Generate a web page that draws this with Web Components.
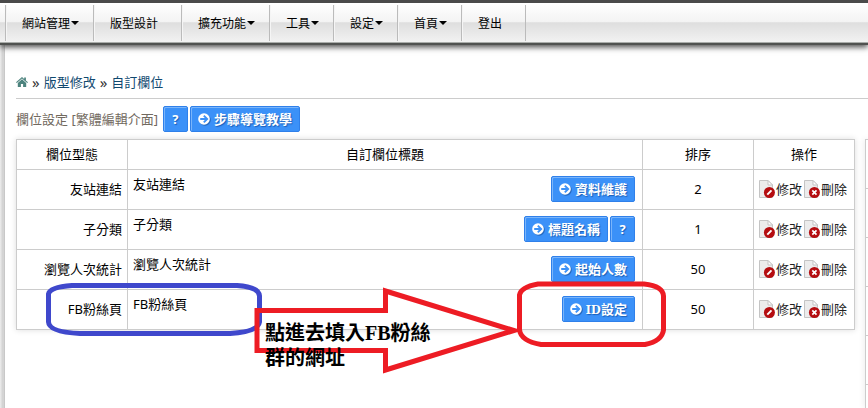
<!DOCTYPE html>
<html lang="zh-Hant">
<head>
<meta charset="utf-8">
<title>自訂欄位</title>
<style>
html, body { height: 100%; }
body { margin: 0; background: #fff; color: #000; font: 13px/18px "Noto Sans", "Noto Sans CJK TC", sans-serif; }
</style>
</head>
<body>
<admin-page></admin-page>
<script>
const define = (name, html, setup) => customElements.define(name, class extends HTMLElement {
  connectedCallback() {
    if (this.shadowRoot) return;
    const root = this.attachShadow({ mode: "open" });
    const t = document.createElement("template");
    t.innerHTML = html;
    root.append(t.content.cloneNode(true));
    if (setup) setup(this, root);
  }
});

define("menu-item", `
<style>
:host { display: block; padding: 2px 23px 0 16px; border-left: 1px solid #bbb; box-shadow: inset 1px 0 #f5f5f5; }
a { display: flex; align-items: center; color: #000; font-size: 12px; line-height: 34px; text-decoration: none; white-space: nowrap; }
i { display: none; width: 0; margin: 0 -9px 2px 1px; border: 4px solid transparent; border-top-color: #000; border-bottom: 0; }
:host([menu]) i { display: block; }
</style>
<a href="#"><slot></slot><i></i></a>`);

define("menu-bar", `
<style>
:host { display: block; position: relative; border-top: 3px solid #4a4a4a; border-bottom: 2px solid #505250; box-shadow: 0 2px 6px #444; background: linear-gradient(#fff 0, #f3f3f3 48%, #dedede 49%, #f3f3f3 100%); }
nav { display: flex; padding: 2px 0 1px 5px; border-bottom: 1px solid #aaadaa; }
.end { border-left: 1px solid #bbb; }
</style>
<nav aria-label="主選單">
<menu-item menu>網站管理</menu-item><menu-item>版型設計</menu-item><menu-item menu>擴充功能</menu-item><menu-item menu>工具</menu-item><menu-item menu>設定</menu-item><menu-item menu>首頁</menu-item><menu-item>登出</menu-item><span class="end"></span>
</nav>`);

define("blue-button", `
<style>
:host { display: inline-flex; }
button { display: flex; align-items: center; justify-content: center; gap: 4px; min-width: 25px; height: 26px; padding: 0 7px; border: 1px solid #2f80ea; border-radius: 2px; background: #3b91f8; box-shadow: inset 1px 1px #7ab5fb; color: #fff; font: bold 13px/18px "Noto Sans", "Noto Sans CJK TC", sans-serif; text-shadow: 1px 1px 1px #1b5fb8; white-space: nowrap; }
:host([serif]) button { font-family: "Noto Serif", "DejaVu Serif", "Noto Sans CJK TC", serif; }
svg { display: none; filter: drop-shadow(1px 1px #2468bd); }
:host([arrow]) svg { display: block; }
</style>
<button type="button"><svg width="12" height="12" viewBox="0 0 12 12"><circle cx="6" cy="6" r="5.8" fill="#fff"/><path d="M2.2 6H9M5.8 2.6 9.2 6 5.8 9.4" fill="none" stroke="#3b91f8" stroke-width="1.9"/></svg><slot></slot></button>`);

define("row-action", `
<style>
:host { display: inline-flex; }
a { display: flex; align-items: center; color: #222; text-decoration: none; line-height: 20px; white-space: nowrap; }
svg { margin-right: 1px; }
:host([kind=edit]) .x, :host([kind=delete]) .slash { display: none; }
</style>
<a href="#"><svg width="16" height="20" viewBox="0 0 16 20"><path d="M.5 1.500H9l4.500 4.500v12.500H.5z" fill="#ececec" stroke="#c4c4c4"/><path d="M9 1.500V6h4.500z" fill="#fff" stroke="#c4c4c4"/><circle cx="10.400" cy="13.500" r="5.500" fill="#b50d10"/><path class="slash" d="m8.300 15.600 4.200-4.200" stroke="#fff" stroke-width="2"/><path class="x" d="m8.300 11.400 4.200 4.200m0-4.200-4.200 4.200" stroke="#fff" stroke-width="1.700"/></svg><slot></slot></a>`);

define("bread-crumbs", `
<style>
:host { display: block; border-bottom: 1px solid #ccc; }
nav { display: flex; align-items: center; gap: 4px; height: 29px; padding-bottom: 2px; color: #333; }
a { color: #10496f; text-decoration: none; }
span { font-size: 15px; }
svg { display: block; margin-top: 1px; }
</style>
<nav aria-label="路徑"><a href="#" aria-label="首頁"><svg width="12" height="10" viewBox="0 0 12 10"><path d="M6 2.300 10.200 6v4H7.100V7H4.900v3H1.800V6zM6 0l2.200 1.900V.6h1.700v2.800L12 5.200l-.8.9L6 1.500.8 6.100 0 5.200z" fill="#4d837e"/></svg></a><span>»</span><a href="#">版型修改</a><span>»</span><a href="#">自訂欄位</a></nav>`);

define("field-table", `
<style>
:host { display: block; }
table { width: 100%; border-collapse: collapse; table-layout: fixed; box-shadow: 0 0 6px #ddd; background: #fff; }
th, td { border: 1px solid #ccc; padding: 0 5px 2px; }
th { height: 27px; font-weight: 400; }
td { height: 37px; }
.type { width: 100px; text-align: right; }
th.type { text-align: center; }
.rank { width: 100px; text-align: center; }
.ops { width: 90px; }
.cell { display: flex; justify-content: space-between; height: 29px; }
.cell > span:first-child { line-height: 20px; }
.buttons { display: flex; gap: 2px; align-items: center; margin-right: 2px; }
.actions { display: flex; gap: 2px; }
</style>
<table><thead><tr><th class="type">欄位型態</th><th>自訂欄位標題</th><th class="rank">排序</th><th class="ops">操作</th></tr></thead><tbody></tbody></table>`,
(host, root) => {
  const rows = [
    ["友站連結", "<blue-button arrow>資料維護</blue-button>", 2],
    ["子分類", "<blue-button arrow>標題名稱</blue-button><blue-button>?</blue-button>", 1],
    ["瀏覽人次統計", "<blue-button arrow>起始人數</blue-button>", 50],
    ["FB粉絲頁", "<blue-button arrow serif>ID設定</blue-button>", 50]
  ];
  root.querySelector("tbody").innerHTML = rows.map(([name, buttons, rank]) => `<tr><td class="type">${name}</td><td><div class="cell"><span>${name}</span><span class="buttons">${buttons}</span></div></td><td class="rank">${rank}</td><td class="ops"><div class="actions"><row-action kind="edit">修改</row-action><row-action kind="delete">刪除</row-action></div></td></tr>`).join("");
});

define("side-panel", `
<style>
:host { display: block; border: 1px solid #ccc; border-width: 1px 0 0 1px; box-shadow: 0 0 6px #ddd; }
div { height: 48px; border-bottom: 1px solid #ccc; }
div:first-child { height: 29px; }
</style>
<div></div><div></div><div></div><div></div><div></div>`);

define("note-layer", `
<style>
:host { position: absolute; left: 0; top: 0; pointer-events: none; }
svg { display: block; }
p { position: absolute; left: 265px; top: 321px; margin: 0; font: bold 20px/25px "Liberation Serif", "Noto Sans CJK TC", serif; white-space: nowrap; }
</style>
<svg width="868" height="408" viewBox="0 0 868 408" fill="none">
<path d="M72 285.500H237Q259 287 259.500 296V322Q258 332 230 333.500H80Q49 332 48.500 322V294Q50 287 72 285.500Z" stroke="#3f48cc" stroke-width="5"/>
<path d="M257 310.500H385.500V291L514 330.500 385.500 370V350.500H257Z" stroke="#ed1c24" stroke-width="5"/>
<path d="M538 284H644Q663 286 663.500 296V330Q662 341 645 344.500H541Q521 341 519.500 330V295Q521 287 538 284Z" stroke="#ed1c24" stroke-width="5"/>
</svg>
<p>點進去填入FB粉絲<br>群的網址</p>`);

define("admin-page", `
<style>
:host { display: flex; flex-direction: column; position: relative; min-height: 100vh; overflow: hidden; }
.body { flex: 1; display: grid; grid-template-columns: 5px minmax(0, 1fr); }
.rail { background: linear-gradient(90deg, #eee, #d4d4d4 60%); border-right: 1px solid #c8c8c8; }
main { display: flex; flex-direction: column; padding: 22px 0 0 11px; }
.title { display: flex; align-items: center; gap: 2px; height: 40px; color: #71695e; }
.title span { margin-right: 3px; }
.panels { flex: 1; display: grid; grid-template-columns: minmax(0, 1fr) 3px; gap: 10px; }
</style>
<menu-bar></menu-bar>
<div class="body"><div class="rail"></div><main>
<bread-crumbs></bread-crumbs>
<div class="title"><span>欄位設定 [繁體編輯介面]</span><blue-button>?</blue-button><blue-button arrow>步驟導覽教學</blue-button></div>
<div class="panels"><field-table></field-table><side-panel></side-panel></div>
</main></div>
<note-layer></note-layer>`);
</script>
</body>
</html>
